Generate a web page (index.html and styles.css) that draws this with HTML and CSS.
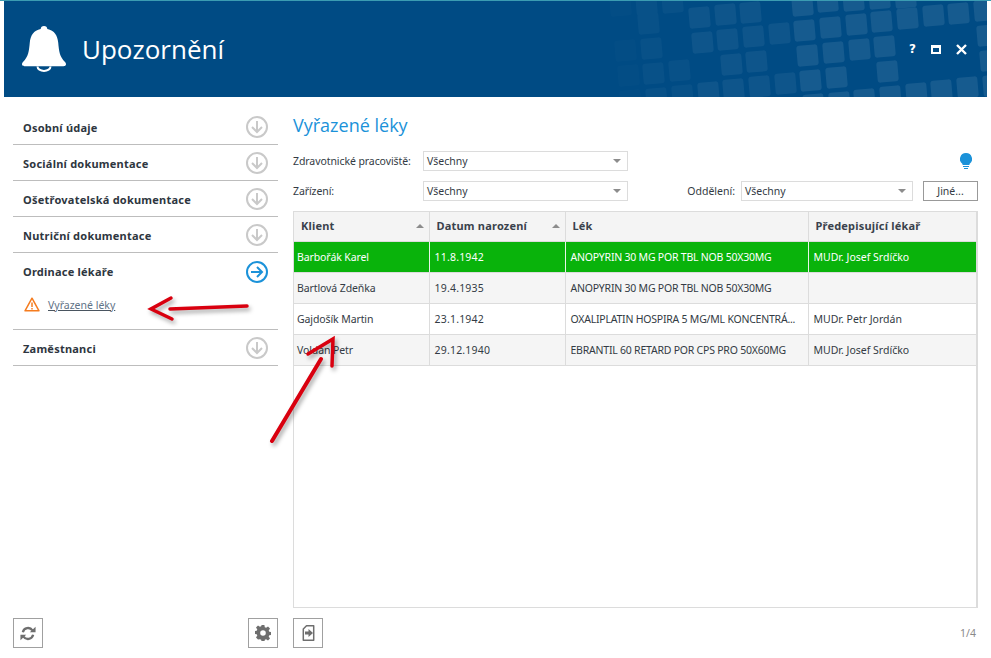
FILE: index.html
```html
<!DOCTYPE html>
<html lang="cs">
<head>
<meta charset="utf-8">
<title>Upozornění</title>
<link rel="stylesheet" href="styles.css">
</head>
<body>
<div class="app">
  <header class="header">
    <svg class="tiles" width="983" height="96" viewBox="4 1 983 96" aria-hidden="true">
      <g class="t1">
        <rect class="tile" x="610" y="-5" width="21" height="21" rx="3"/><rect class="tile" x="615" y="40" width="21" height="21" rx="3"/><rect class="tile" x="618" y="65" width="21" height="21" rx="3"/><rect class="tile" x="620" y="90" width="21" height="21" rx="3"/>
      </g>
      <g class="t2">
        <rect class="tile" x="636" y="-6" width="21" height="21" rx="3"/><rect class="tile" x="638" y="13" width="21" height="21" rx="3"/><rect class="tile" x="641" y="38" width="21" height="21" rx="3"/><rect class="tile" x="643" y="63" width="21" height="21" rx="3"/><rect class="tile" x="646" y="88" width="21" height="21" rx="3"/><rect class="tile" x="662" y="-8" width="21" height="21" rx="3"/><rect class="tile" x="669" y="60" width="21" height="21" rx="3"/><rect class="tile" x="672" y="85" width="21" height="21" rx="3"/>
      </g>
      <g class="t3">
        <rect class="tile" x="689" y="7" width="21" height="21" rx="3"/><rect class="tile" x="692" y="32" width="21" height="21" rx="3"/><rect class="tile" x="698" y="82" width="21" height="21" rx="3"/><rect class="tile" x="715" y="4" width="21" height="21" rx="3"/><rect class="tile" x="717" y="29" width="21" height="21" rx="3"/><rect class="tile" x="721" y="54" width="21" height="21" rx="3"/><rect class="tile" x="723" y="79" width="21" height="21" rx="3"/><rect class="tile" x="740" y="2" width="21" height="21" rx="3"/><rect class="tile" x="743" y="26" width="21" height="21" rx="3"/><rect class="tile" x="746" y="51" width="21" height="21" rx="3"/><rect class="tile" x="749" y="76" width="21" height="21" rx="3"/><rect class="tile" x="769" y="23" width="21" height="21" rx="3"/><rect class="tile" x="775" y="73" width="21" height="21" rx="3"/>
      </g>
      <g class="t4">
        <rect class="tile" x="792" y="-5" width="21" height="21" rx="3"/><rect class="tile" x="794" y="20" width="21" height="21" rx="3"/><rect class="tile" x="797" y="45" width="21" height="21" rx="3"/><rect class="tile" x="800" y="70" width="21" height="21" rx="3"/><rect class="tile" x="803" y="94" width="21" height="21" rx="3"/><rect class="tile" x="817" y="-9" width="21" height="21" rx="3"/><rect class="tile" x="820" y="17" width="21" height="21" rx="3"/><rect class="tile" x="823" y="42" width="21" height="21" rx="3"/><rect class="tile" x="826" y="67" width="21" height="21" rx="3"/><rect class="tile" x="829" y="92" width="21" height="21" rx="3"/><rect class="tile" x="843" y="-10" width="21" height="21" rx="3"/><rect class="tile" x="846" y="14" width="21" height="21" rx="3"/><rect class="tile" x="849" y="39" width="21" height="21" rx="3"/><rect class="tile" x="854" y="89" width="21" height="21" rx="3"/><rect class="tile" x="869" y="-12" width="21" height="21" rx="3"/><rect class="tile" x="871" y="11" width="21" height="21" rx="3"/><rect class="tile" x="874" y="36" width="21" height="21" rx="3"/><rect class="tile" x="877" y="61" width="21" height="21" rx="3"/><rect class="tile" x="880" y="86" width="21" height="21" rx="3"/><rect class="tile" x="895" y="-13" width="21" height="21" rx="3"/><rect class="tile" x="897" y="8" width="21" height="21" rx="3"/><rect class="tile" x="906" y="83" width="21" height="21" rx="3"/><rect class="tile" x="923" y="5" width="21" height="21" rx="3"/><rect class="tile" x="931" y="80" width="21" height="21" rx="3"/><rect class="tile" x="948" y="3" width="21" height="21" rx="3"/><rect class="tile" x="957" y="77" width="21" height="21" rx="3"/><rect class="tile" x="974" y="0" width="21" height="21" rx="3"/><rect class="tile" x="977" y="25" width="21" height="21" rx="3"/><rect class="tile" x="980" y="50" width="21" height="21" rx="3"/><rect class="tile" x="983" y="75" width="21" height="21" rx="3"/>
      </g>
    </svg>
    <svg class="bell" width="44" height="46" viewBox="0 0 44 46" aria-hidden="true">
      <path class="bell-fill" d="M22 0c-2 0-3.200 1.300-3.300 2.900C11.500 4.200 8.500 9.500 7.800 16.500 7 25 6.500 30.500 1 36c-1 1-1.200 2.200-.8 3 .4.800 1.200 1.200 2.300 1.200h39c1.100 0 1.900-.4 2.300-1.200.4-.8.200-2-.8-3-5.500-5.500-6-11-6.800-19.500C35.500 9.500 32.500 4.200 25.300 2.900 25.200 1.300 24 0 22 0z"/>
      <path class="bell-ring" d="M15.500 40.500a6.500 4.500 0 0 0 13 0"/>
    </svg>
    <h1 class="app-title">Upozornění</h1>
    <div class="win-controls">
      <span class="win-help">?</span>
      <svg width="10" height="9" viewBox="0 0 10 9" aria-hidden="true"><path class="win-icon" fill-rule="evenodd" d="M0 0h10v9H0zM2 3v4h6V3z"/></svg>
      <svg width="11" height="11" viewBox="0 0 11 11" aria-hidden="true"><path class="win-x" d="M1 1l9 9M10 1l-9 9"/></svg>
    </div>
  </header>

  <div class="content">
    <aside class="sidebar">
      <nav class="nav">
        <div class="nav-row"><span>Osobní údaje</span>
          <svg class="circle" width="22" height="22" viewBox="0 0 22 22" aria-hidden="true"><circle cx="11" cy="11" r="10"/><path d="M11 5v11M6 11l5 5 5-5"/></svg></div>
        <div class="nav-row"><span>Sociální dokumentace</span>
          <svg class="circle" width="22" height="22" viewBox="0 0 22 22" aria-hidden="true"><circle cx="11" cy="11" r="10"/><path d="M11 5v11M6 11l5 5 5-5"/></svg></div>
        <div class="nav-row"><span>Ošetřovatelská dokumentace</span>
          <svg class="circle" width="22" height="22" viewBox="0 0 22 22" aria-hidden="true"><circle cx="11" cy="11" r="10"/><path d="M11 5v11M6 11l5 5 5-5"/></svg></div>
        <div class="nav-row"><span>Nutriční dokumentace</span>
          <svg class="circle" width="22" height="22" viewBox="0 0 22 22" aria-hidden="true"><circle cx="11" cy="11" r="10"/><path d="M11 5v11M6 11l5 5 5-5"/></svg></div>
        <div class="nav-group">
          <div class="nav-row nav-row-open"><span>Ordinace lékaře</span>
            <svg class="circle circle-active" width="22" height="22" viewBox="0 0 22 22" aria-hidden="true"><circle cx="11" cy="11" r="10"/><path d="M5 11h11M11 6l5 5-5 5"/></svg></div>
          <div class="nav-sub">
            <svg width="16" height="15" viewBox="0 0 16 15" aria-hidden="true"><path class="warn" d="M8 1.200L1 13.800h14z"/><path class="warn-mark" d="M8 5.500v4.500M8 11v1.500"/></svg>
            <a class="nav-link" href="#">Vyřazené léky</a>
          </div>
        </div>
        <div class="nav-row"><span>Zaměstnanci</span>
          <svg class="circle" width="22" height="22" viewBox="0 0 22 22" aria-hidden="true"><circle cx="11" cy="11" r="10"/><path d="M11 5v11M6 11l5 5 5-5"/></svg></div>
      </nav>
      <div class="foot">
        <button class="icon-btn" type="button" aria-label="Obnovit">
          <svg width="16" height="15" viewBox="0 0 18 16" aria-hidden="true"><path class="sync" d="M3.200 6.500A6 6 0 0 1 14 4.500M14.800 9.500A6 6 0 0 1 4 11.500"/><path class="glyph" d="M11 6.500h6.500V.5zM7 9.500H.5v6z"/></svg>
        </button>
        <button class="icon-btn" type="button" aria-label="Nastavení">
          <svg width="16" height="16" viewBox="0 0 16 16" aria-hidden="true"><path class="glyph" fill-rule="evenodd" d="M6.600 0h2.800l.4 2.200 1.300.6L13 1.500l2 2-1.300 1.900.6 1.300 2.200.4v2.800l-2.200.4-.6 1.300 1.300 1.900-2 2-1.900-1.300-1.300.6-.4 2.200H6.600l-.4-2.200-1.300-.6L3 14.500l-2-2 1.300-1.900-.6-1.300L-.5 8.900V6.100l2.200-.4.6-1.300L1 2.500l2-2 1.900 1.300 1.300-.6zM8 5.200a2.800 2.800 0 1 0 0 5.600 2.800 2.800 0 0 0 0-5.600z"/></svg>
        </button>
      </div>
    </aside>

    <main class="main">
      <h2 class="section-title">Vyřazené léky</h2>
      <div class="filter-row">
        <label class="filter-label">Zdravotnické pracoviště:</label>
        <div class="combo combo-wide"><span>Všechny</span><i class="caret"></i></div>
        <svg class="bulb" width="12" height="17" viewBox="0 0 12 17" aria-hidden="true"><path class="bulb-fill" d="M6 0a6 6 0 0 1 3.500 10.900V12h-7v-1.100A6 6 0 0 1 6 0z"/><path class="bulb-base" d="M3 13.500h6M4 15.500h4"/></svg>
      </div>
      <div class="filter-row">
        <label class="filter-label">Zařízení:</label>
        <div class="combo combo-wide"><span>Všechny</span><i class="caret"></i></div>
        <label class="filter-label-inline">Oddělení:</label>
        <div class="combo combo-dept"><span>Všechny</span><i class="caret"></i></div>
        <button class="other-btn" type="button">Jiné...</button>
      </div>

      <div class="grid-wrap">
        <table class="grid">
          <colgroup><col class="c1"><col class="c2"><col class="c3"><col></colgroup>
          <thead>
            <tr>
              <th><span>Klient</span><i class="sort"></i></th>
              <th><span>Datum narození</span><i class="sort"></i></th>
              <th><span>Lék</span></th>
              <th><span>Předepisující lékař</span></th>
            </tr>
          </thead>
          <tbody>
            <tr class="row-sel"><td>Barbořák Karel</td><td class="date">11.8.1942</td><td class="drug">ANOPYRIN 30 MG POR TBL NOB 50X30MG</td><td>MUDr. Josef Srdíčko</td></tr>
            <tr class="row-alt"><td>Bartlová Zdeňka</td><td class="date">19.4.1935</td><td class="drug">ANOPYRIN 30 MG POR TBL NOB 50X30MG</td><td></td></tr>
            <tr><td>Gajdošík Martin</td><td class="date">23.1.1942</td><td class="drug">OXALIPLATIN HOSPIRA 5 MG/ML KONCENTRÁ...</td><td>MUDr. Petr Jordán</td></tr>
            <tr class="row-alt"><td>Voldán Petr</td><td class="date">29.12.1940</td><td class="drug">EBRANTIL 60 RETARD POR CPS PRO 50X60MG</td><td>MUDr. Josef Srdíčko</td></tr>
          </tbody>
        </table>
      </div>

      <div class="foot">
        <button class="icon-btn" type="button" aria-label="Export">
          <svg width="13" height="16" viewBox="0 0 12 16" aria-hidden="true"><path class="file" d="M4 .8h7.200v14.400H.8V4z"/><path class="glyph" d="M2.500 6.500h3.500V4l4.500 4-4.500 4V9.500H2.500z"/></svg>
        </button>
        <span class="pager">1/4</span>
      </div>
    </main>
  </div>

  <svg class="arrows" width="991" height="658" viewBox="0 0 991 658" aria-hidden="true">
    <path class="arrow-shaft arrow-thin" d="M247 306L170 309"/>
    <path class="arrow-head" d="M171 298L151 309L172 319"/>
    <path class="arrow-shaft" d="M272 441L321 359"/>
    <path class="arrow-head" d="M308 354L333 339L332 366"/>
  </svg>
</div>
</body>
</html>
```
FILE: styles.css
```css
* { box-sizing: border-box; }
html, body { margin: 0; padding: 0; }
body {
  width: 991px;
  height: 658px;
  overflow: hidden;
  background: #fff;
  font-family: "Noto Sans", "Open Sans", sans-serif;
  font-size: 10.5px;
  color: #333b44;
}
.app {
  position: relative;
  width: 991px;
  height: 658px;
  display: flex;
  flex-direction: column;
  border-top: 1px solid #3b9cb2;
}

/* header */
.header {
  position: relative;
  flex: none;
  height: 96px;
  margin: 0 4px;
  padding-left: 18px;
  display: flex;
  align-items: center;
  background: #004b84;
  overflow: hidden;
}
.tiles { position: absolute; left: 0; top: 0; }
.tile {
  fill: #fff;
  transform-box: fill-box;
  transform-origin: center;
  transform: rotate(-5deg);
}
.t1 { opacity: .012; }
.t2 { opacity: .03; }
.t3 { opacity: .055; }
.t4 { opacity: .085; }
.bell { position: relative; flex: none; }
.bell-fill { fill: #fff; }
.bell-ring { fill: none; stroke: #fff; stroke-width: 2; }
.app-title {
  position: relative;
  margin: 0 0 0 16px;
  font-family: "Open Sans", "Noto Sans", sans-serif;
  font-size: 26px;
  font-weight: 400;
  color: #fff;
  line-height: 36px;
}
.win-controls {
  position: relative;
  margin-left: auto;
  margin-right: 20px;
  display: flex;
  align-items: center;
  gap: 15px;
}
.win-help {
  font-family: "DejaVu Sans", sans-serif;
  font-size: 12px;
  font-weight: 700;
  color: #fff;
  line-height: 14px;
}
.win-icon { fill: #fff; }
.win-x { fill: none; stroke: #fff; stroke-width: 2.400; }

/* layout */
.content {
  flex: 1;
  min-height: 0;
  display: grid;
  grid-template-columns: 265px 685px;
  column-gap: 15px;
  padding: 0 13px 10px;
}
.sidebar, .main {
  min-height: 0;
  display: flex;
  flex-direction: column;
}
.sidebar { padding-top: 12px; }
.nav { flex: 1; }
.nav-row {
  height: 36px;
  padding: 1px 10px 0;
  display: flex;
  align-items: center;
  justify-content: space-between;
  border-bottom: 1px solid #bdbdbd;
  font-weight: 700;
  font-size: 11px;
  letter-spacing: .23px;
  color: #2e3640;
}
.nav-row-open { border-bottom: 0; height: 36px; }
.nav-group {
  border-bottom: 1px solid #bdbdbd;
}
.circle { fill: none; stroke: #c9c9c9; stroke-width: 2; flex: none; }
.circle-active { stroke: #1b92d9; }
.nav-sub {
  height: 40px;
  padding: 0 0 9px 11px;
  display: flex;
  align-items: center;
  gap: 8px;
}
.warn { fill: none; stroke: #f57c1f; stroke-width: 1.500; stroke-linejoin: round; }
.warn-mark { fill: none; stroke: #f57c1f; stroke-width: 1.500; }
.nav-link { color: #5f7387; text-decoration: underline; text-decoration-color: #4a5560; }

/* footer bars */
.foot {
  flex: none;
  height: 30px;
  display: flex;
  align-items: center;
  justify-content: space-between;
}
.icon-btn {
  width: 30px;
  height: 30px;
  padding: 0;
  display: flex;
  align-items: center;
  justify-content: center;
  background: #fff;
  border: 1px solid #a0a0a0;
}
.glyph { fill: #6e6e6e; }
.sync { fill: none; stroke: #6e6e6e; stroke-width: 2.600; }
.file { fill: none; stroke: #6e6e6e; stroke-width: 1.500; stroke-linejoin: round; }
.pager { margin-right: 2px; color: #8a8a8a; }

/* main */
.section-title {
  margin: 0;
  height: 54px;
  padding-top: 12px;
  font-family: "Open Sans", "Noto Sans", sans-serif;
  font-size: 18px;
  line-height: 32px;
  font-weight: 400;
  color: #1b92d9;
}
.filter-row {
  flex: none;
  height: 20px;
  margin-bottom: 10px;
  display: flex;
  align-items: center;
}
.filter-label { flex: none; width: 130px; letter-spacing: -.08px; }
.filter-label-inline { margin-left: auto; margin-right: 6px; }
.combo {
  flex: none;
  height: 20px;
  padding: 0 4px 0 3px;
  display: flex;
  align-items: center;
  justify-content: space-between;
  border: 1px solid #dcdcdc;
  background: #fff;
}
.combo-wide { width: 205px; }
.combo-dept { width: 172px; }
.caret {
  width: 0;
  height: 0;
  margin-right: 2px;
  border-style: solid;
  border-width: 4px 4px 0;
  border-color: #8c8c8c transparent transparent;
}
.bulb { margin-left: auto; margin-right: 6px; }
.bulb-fill { fill: #1b92d9; }
.bulb-base { fill: none; stroke: #1b92d9; stroke-width: 1.200; }
.other-btn {
  width: 55px;
  height: 20px;
  margin-left: 10px;
  padding: 0;
  font: inherit;
  color: inherit;
  background: #fff;
  border: 1px solid #999;
}

/* table */
.grid-wrap {
  flex: 1;
  min-height: 0;
  margin-bottom: 10px;
  border: 1px solid #dcdcdc;
  border-width: 1px 2px 1px 1px;
}
.grid {
  width: 100%;
  table-layout: fixed;
  border-collapse: collapse;
}
.c1 { width: 135px; }
.c2 { width: 136px; }
.c3 { width: 243px; }
.grid th {
  height: 29px;
  padding: 0 7px 2px;
  text-align: left;
  font-size: 11px;
  letter-spacing: .2px;
  font-weight: 700;
  color: #3a424c;
  background: #f4f4f4;
  border-right: 1px solid #dcdcdc;
  border-bottom: 1px solid #dcdcdc;
  position: relative;
}
.grid th:first-child { padding-left: 7px; }
.grid th span { display: inline-block; }
.sort {
  position: absolute;
  right: 5px;
  top: 12px;
  width: 0;
  height: 0;
  border-style: solid;
  border-width: 0 4px 4px;
  border-color: transparent transparent #8c8c8c;
}
.grid td {
  height: 31px;
  padding: 0 3px 0 5px;
  white-space: nowrap;
  overflow: hidden;
  border-right: 1px solid #dcdcdc;
  border-bottom: 1px solid #dcdcdc;
}
.grid td:first-child { padding-left: 3px; letter-spacing: -.1px; }
.grid .date { letter-spacing: .2px; }
.grid .drug { letter-spacing: -.22px; }
.grid th:last-child, .grid td:last-child { border-right: 0; }
.row-sel td { background: #09b30b; color: #fff; border-right-color: #e8f5e8; }
.row-alt td { background: #f5f5f5; }

/* annotation overlay */
.arrows {
  position: absolute;
  left: 0;
  top: -1px;
  pointer-events: none;
  filter: drop-shadow(2px 3px 2px rgba(0, 0, 0, .35));
}
.arrow-shaft { fill: none; stroke: #d9000f; stroke-width: 4; stroke-linecap: round; }
.arrow-thin { stroke-width: 3.500; }
.arrow-head { fill: none; stroke: #d9000f; stroke-width: 3.500; stroke-linecap: round; stroke-linejoin: miter; }
```
